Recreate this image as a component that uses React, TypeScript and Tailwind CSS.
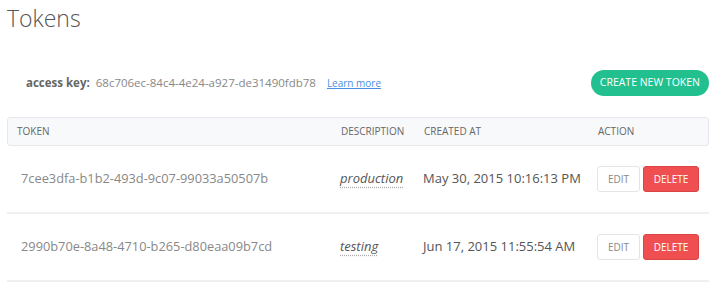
const rows = [
  {
    token: '7cee3dfa-b1b2-493d-9c07-99033a50507b',
    description: 'production',
    createdAt: 'May 30, 2015 10:16:13 PM',
  },
  {
    token: '2990b70e-8a48-4710-b265-d80eaa09b7cd',
    description: 'testing',
    createdAt: 'Jun 17, 2015 11:55:54 AM',
  },
];

export default function App() {
  return (
    <div className="w-[719px] h-[286px] overflow-hidden bg-white font-['Open_Sans',sans-serif] text-[#555]">
      <h1 className="pl-[7px] pt-[3px] text-[23px] leading-[30px] font-light text-[#555]">Tokens</h1>

      <div className="mt-[37px] flex items-center pl-[26px] pr-[10px]">
        <span className="text-[11.5px] font-bold text-[#666]">access key:</span>
        <span className="ml-[6px] text-[11.5px] text-[#888]">68c706ec-84c4-4e24-a927-de31490fdb78</span>
        <a href="#" className="ml-[11px] text-[10px] text-[#4a90e2] underline">
          Learn more
        </a>
        <button className="ml-auto h-[26px] rounded-full bg-[#22c08e] px-[9px] text-[10.5px] text-white">
          CREATE NEW TOKEN
        </button>
      </div>

      <div className="mt-[21px] mx-[7px] w-[702px]">
        <div className="grid h-[29px] grid-cols-[326px_83px_174px_1fr] items-center rounded-[3px] border border-[#e6e8eb] bg-[#f8f9fb] text-[10px] text-[#666]">
          <div className="pl-[9px]">TOKEN</div>
          <div className="pl-[7px]">DESCRIPTION</div>
          <div className="pl-[7px]">CREATED AT</div>
          <div className="pl-[7px]">ACTION</div>
        </div>

        {rows.map((row) => (
          <div
            key={row.token}
            className="grid h-[68px] grid-cols-[326px_83px_174px_1fr] items-center border-b-2 border-[#eef0f2] text-[13px]"
          >
            <div className="pl-[14px] text-[12.8px] text-[#888]">{row.token}</div>
            <div className="pl-[7px]">
              <span className="italic text-[#555] underline decoration-dotted decoration-[#aaa] underline-offset-[4px]">
                {row.description}
              </span>
            </div>
            <div className="pl-[7px] text-[#555]">{row.createdAt}</div>
            <div className="flex gap-[3px] pl-[7px]">
              <button className="h-[26px] w-[43px] rounded-[3px] border border-[#e2e4e7] bg-white text-[10px] text-[#888]">
                EDIT
              </button>
              <button className="h-[26px] w-[56px] rounded-[3px] border border-[#d94444] bg-[#f04f51] text-[10px] text-white">
                DELETE
              </button>
            </div>
          </div>
        ))}
      </div>
    </div>
  );
}
